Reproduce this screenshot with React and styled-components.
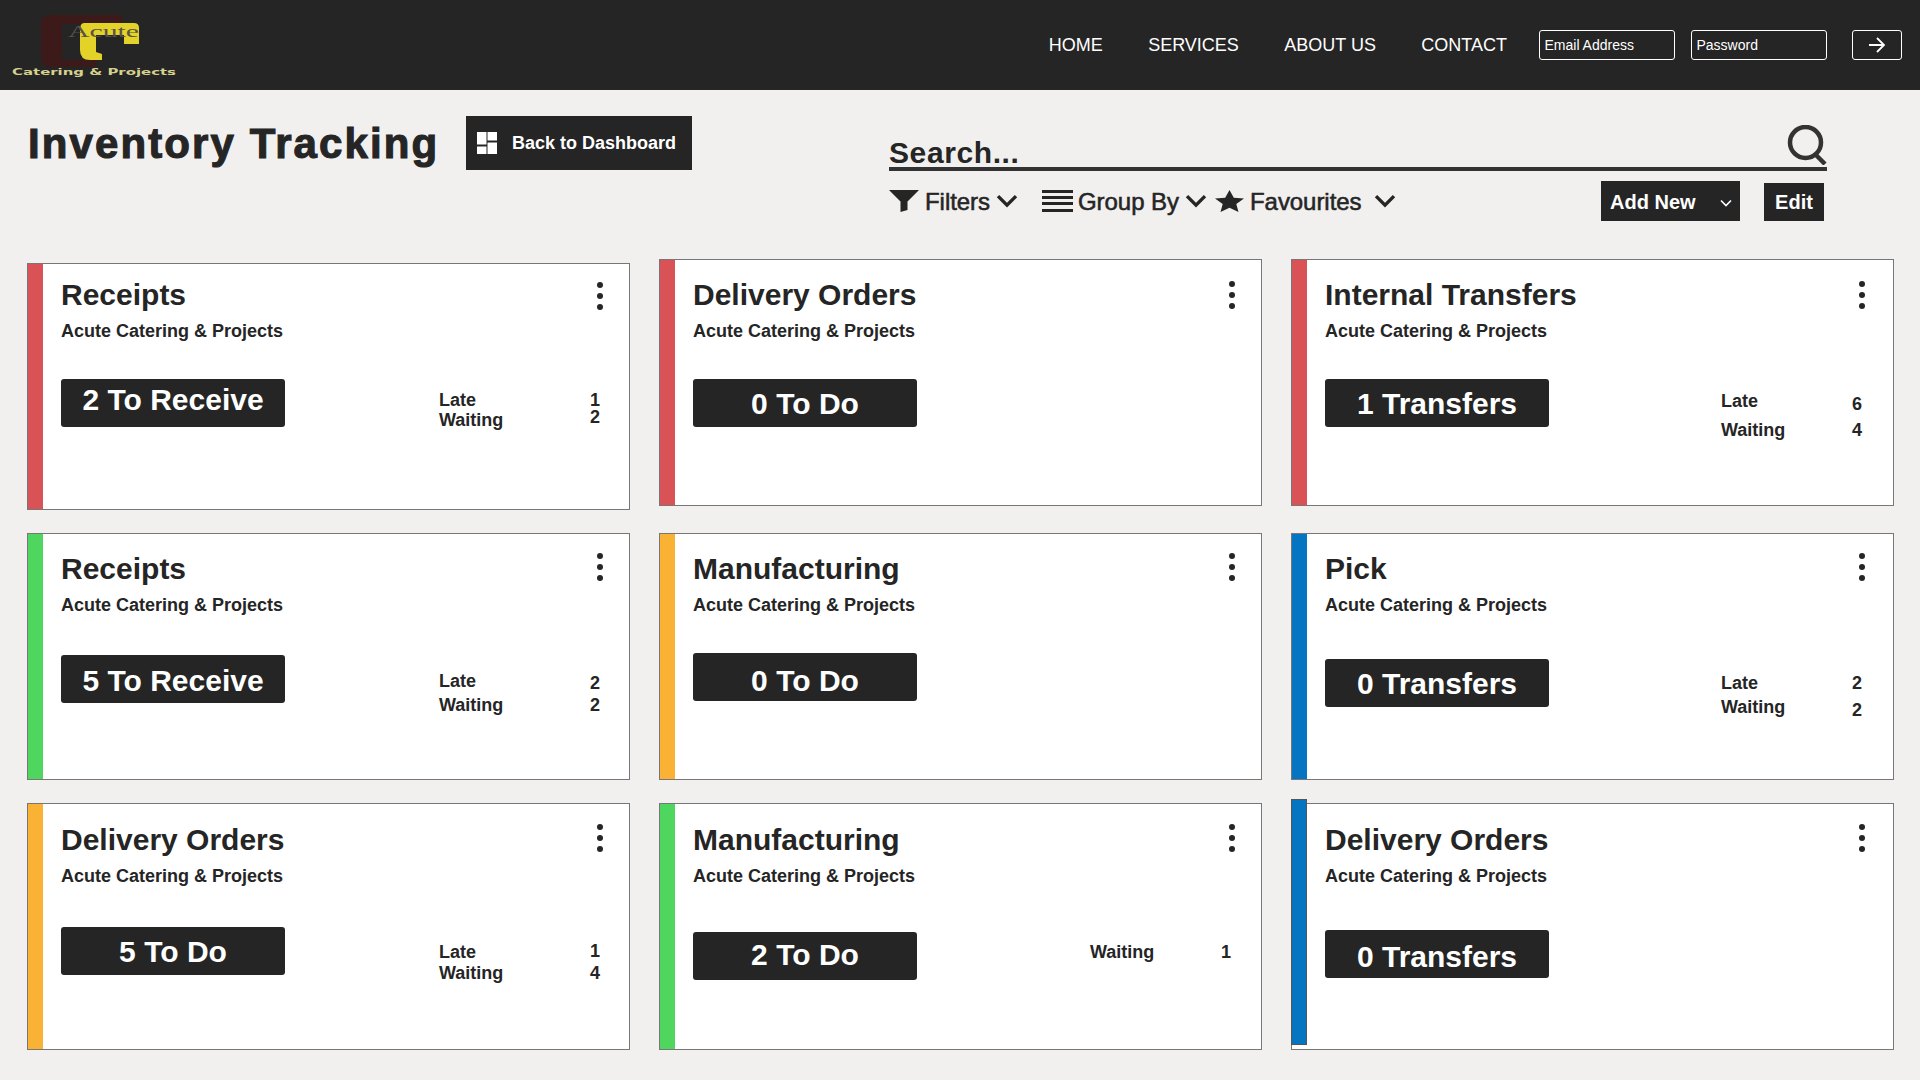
import React from "react"
import styled, { createGlobalStyle } from "styled-components"

const GlobalStyle = createGlobalStyle`
  html, body {
    margin: 0;
    background: #f1f0ef;
  }
  * {
    box-sizing: border-box;
  }
  body {
    font-family: "Liberation Sans", Arial, sans-serif;
    color: #252525;
  }
`
const Page = styled.div`
  min-height: 1080px;
  background: #f1f0ef;
`
const TopBar = styled.header`
  height: 90px;
  background: #252525;
  display: flex;
  align-items: center;
  padding: 0 18px 0 12px;
`
const Logo = styled.svg`
  width: 166px;
  height: 72px;
  display: block;
`
const Nav = styled.nav`
  margin-left: auto;
  display: flex;
  align-items: center;
  gap: 45.4px;
  padding-right: 32px;
`
const NavLink = styled.a`
  color: #fff;
  font-size: 18px;
  line-height: 20px;
`
const LoginInput = styled.input`
  width: 136px;
  height: 30px;
  margin-right: 16px;
  padding: 0 4.5px;
  border: 1px solid #fff;
  border-radius: 3px;
  background: transparent;
  color: #fff;
  font-family: inherit;
  font-size: 14px;
  &::placeholder {
    color: #fff;
    opacity: 1;
  }
`
const ArrowButton = styled.button`
  width: 50px;
  height: 30px;
  margin-left: 9px;
  padding: 0;
  border: 1.5px solid #fff;
  border-radius: 3px;
  background: transparent;
  display: flex;
  align-items: center;
  justify-content: center;
`
const Intro = styled.section`
  height: 169px;
  display: grid;
  grid-template-columns: 889px 938px;
`
const TitleBlock = styled.div`
  padding: 26px 0 0 28px;
  display: flex;
  align-items: flex-start;
  gap: 29px;
`
const PageTitle = styled.h1`
  margin: 0;
  width: 409px;
  font-size: 42px;
  line-height: 56px;
  font-weight: 700;
  letter-spacing: 2.1px;
  white-space: nowrap;
  -webkit-text-stroke: 1.1px #252525;
`
const BackButton = styled.button`
  width: 226px;
  height: 54px;
  padding: 0 0 0 11px;
  border: 0;
  background: #252525;
  color: #fff;
  font-family: inherit;
  font-size: 18px;
  font-weight: 700;
  display: flex;
  align-items: center;
  gap: 15px;
`
const FindBlock = styled.div`
  padding-top: 36px;
`
const SearchRow = styled.div`
  height: 45px;
  border-bottom: 4px solid #333;
  display: flex;
  align-items: flex-end;
  justify-content: space-between;
`
const SearchText = styled.span`
  font-size: 30px;
  line-height: 34px;
  font-weight: 700;
  letter-spacing: 0.6px;
  margin-bottom: -3px;
`
const SearchIcon = styled.svg`
  width: 40px;
  height: 40px;
  display: block;
  margin-bottom: 2px;
`
const Toolbar = styled.div`
  margin-top: 10px;
  height: 40px;
  display: flex;
  align-items: center;
`
const ToolGroup = styled.div`
  display: flex;
  align-items: center;
  gap: 6px;
  margin-left: ${(p) => p.$left || 0}px;
`
const ToolLabel = styled.span`
  font-size: 24px;
  line-height: 28px;
  letter-spacing: -0.05px;
  white-space: nowrap;
  -webkit-text-stroke: 0.55px #252525;
  margin: 2px ${(p) => p.$after || 0}px 0 ${(p) => p.$before || 0}px;
`
const AddNewButton = styled.button`
  width: 139px;
  height: 40px;
  margin-left: auto;
  padding: 3px 8px 0 9px;
  border: 0;
  background: #252525;
  color: #fff;
  font-family: inherit;
  font-size: 20px;
  font-weight: 700;
  display: flex;
  align-items: center;
  justify-content: space-between;
`
const EditButton = styled.button`
  width: 60px;
  height: 38px;
  margin: 2px 3px 0 24px;
  padding: 0;
  border: 0;
  background: #252525;
  color: #fff;
  font-family: inherit;
  font-size: 20px;
  font-weight: 700;
`
const CardGrid = styled.main`
  padding-left: 27px;
  display: grid;
  grid-template-columns: repeat(3, 603px);
  grid-template-rows: 251px 247px 247px;
  column-gap: 29px;
  row-gap: 23px;
`
const Card = styled.article`
  height: 247px;
  align-self: ${(p) => (p.$low ? "end" : "start")};
  border: 1px solid #777;
  background: #fff;
  display: flex;
`
const Strip = styled.div`
  width: ${(p) => (p.$lifted ? 16 : 15)}px;
  flex: none;
  background: ${(p) => p.$color};
  margin: ${(p) => (p.$lifted ? "-5px 0 4px -1px" : "0")};
  border: ${(p) => (p.$lifted ? "1px solid #555" : "0")};
`
const CardBody = styled.div`
  flex: 1;
  min-width: 0;
  padding: ${(p) => p.$top}px 0 0 18px;
`
const CardHead = styled.div`
  height: 36px;
  display: flex;
  align-items: center;
  justify-content: space-between;
  padding-right: ${(p) => p.$right}px;
`
const CardTitle = styled.h2`
  margin: 0;
  font-size: 30px;
  line-height: 36px;
  font-weight: 700;
`
const Kebab = styled.div`
  display: flex;
  flex-direction: column;
  gap: 5px;
  margin: ${(p) => (p.$nudge > 0 ? `${p.$nudge * 2}px 0 0` : `0 0 ${-p.$nudge * 2}px`)};
  span {
    width: 6px;
    height: 6px;
    border-radius: 50%;
    background: #252525;
  }
`
const Company = styled.p`
  margin: 8px 0 0;
  font-size: 18px;
  line-height: 20px;
  font-weight: 700;
`
const CountRow = styled.div`
  margin-top: ${(p) => p.$gap}px;
  display: flex;
  align-items: flex-start;
`
const CountButton = styled.button`
  width: 224px;
  height: 48px;
  flex: none;
  padding: ${(p) => (p.$shift < 0 ? `0 0 ${-p.$shift}px` : `${p.$shift}px 0 0`)};
  border: 0;
  border-radius: 3px;
  background: #252525;
  color: #fff;
  font-family: inherit;
  font-size: 30px;
  font-weight: 700;
`
const Stats = styled.div`
  margin-left: ${(p) => p.$left}px;
  width: ${(p) => p.$width}px;
  display: flex;
  justify-content: space-between;
`
const StatColumn = styled.div`
  padding-top: ${(p) => p.$top}px;
  display: flex;
  flex-direction: column;
  gap: ${(p) => p.$gap}px;
  font-size: 18px;
  line-height: 16px;
  font-weight: 700;
  text-align: ${(p) => p.$align || "left"};
`

const cards = [
  { title: "Receipts", color: "#d95356", low: true, pad: 13, gap: 38, label: "2 To Receive", shift: -6, right: 26, nudge: 1,
    stats: { left: 154, width: 161, names: ["Late", "Waiting"], nameTop: 13, nameGap: 4, values: [1, 2], valueTop: 13, valueGap: 1 } },
  { title: "Delivery Orders", color: "#d95356", gap: 38, label: "0 To Do", shift: 2, right: 26, nudge: 0 },
  { title: "Internal Transfers", color: "#d95356", gap: 38, label: "1 Transfers", shift: 2, right: 28, nudge: 0,
    stats: { left: 172, width: 141, names: ["Late", "Waiting"], nameTop: 14, nameGap: 13, values: [6, 4], valueTop: 17, valueGap: 10 } },
  { title: "Receipts", color: "#4fd65f", gap: 40, label: "5 To Receive", shift: 4, right: 26, nudge: -2,
    stats: { left: 154, width: 161, names: ["Late", "Waiting"], nameTop: 18, nameGap: 8, values: [2, 2], valueTop: 20, valueGap: 6 } },
  { title: "Manufacturing", color: "#f9b233", gap: 38, label: "0 To Do", shift: 8, right: 26, nudge: -2 },
  { title: "Pick", color: "#0575c1", gap: 44, label: "0 Transfers", shift: 2, right: 28, nudge: -2,
    stats: { left: 172, width: 141, names: ["Late", "Waiting"], nameTop: 16, nameGap: 8, values: [2, 2], valueTop: 16, valueGap: 11 } },
  { title: "Delivery Orders", color: "#f9b233", pad: 18, gap: 41, label: "5 To Do", shift: 2, right: 26, nudge: -2,
    stats: { left: 154, width: 161, names: ["Late", "Waiting"], nameTop: 17, nameGap: 5, values: [1, 4], valueTop: 16, valueGap: 6 } },
  { title: "Manufacturing", color: "#4fd65f", pad: 18, gap: 46, label: "2 To Do", shift: -2, right: 26, nudge: -2,
    stats: { left: 173, width: 141, names: ["Waiting"], nameTop: 12, nameGap: 0, values: [1], valueTop: 12, valueGap: 0 } },
  { title: "Delivery Orders", color: "#0575c1", pad: 18, gap: 44, label: "0 Transfers", shift: 6, right: 28, nudge: -2, lifted: true },
]

const Chevron = ({ size = 22 }) => (
  <svg width={size} height={size * 0.6} viewBox="0 0 22 13" fill="none" stroke="#252525" strokeWidth="3.4">
    <path d="M2 2l9 9 9-9" />
  </svg>
)

const InventoryCard = ({ card }) => (
  <Card $low={card.low}>
    <Strip $color={card.color} $lifted={card.lifted} />
    <CardBody $top={card.pad || 17}>
      <CardHead $right={card.right}>
        <CardTitle>{card.title}</CardTitle>
        <Kebab $nudge={card.nudge}>
          <span />
          <span />
          <span />
        </Kebab>
      </CardHead>
      <Company>Acute Catering &amp; Projects</Company>
      <CountRow $gap={card.gap}>
        <CountButton $shift={card.shift}>{card.label}</CountButton>
        {card.stats && (
          <Stats $left={card.stats.left} $width={card.stats.width}>
            <StatColumn $top={card.stats.nameTop} $gap={card.stats.nameGap}>
              {card.stats.names.map((name) => (
                <span key={name}>{name}</span>
              ))}
            </StatColumn>
            <StatColumn $top={card.stats.valueTop} $gap={card.stats.valueGap} $align="right">
              {card.stats.values.map((value, index) => (
                <span key={index}>{value}</span>
              ))}
            </StatColumn>
          </Stats>
        )}
      </CountRow>
    </CardBody>
  </Card>
)

const App = () => (
  <Page>
    <GlobalStyle />
    <TopBar>
      <Logo viewBox="0 0 166 72">
        <path d="M39 6H110V15H50V51H84V58H39Q29 58 29 48V16Q29 6 39 6Z" fill="#3c1a1a" />
        <path d="M72 14H122Q127 14 127 19V35H112V26H84V43L90 45V51H78Q68 51 68 41V21Q68 14 72 14Z" fill="#e3d228" />
        <text x="56" y="28" textLength="71" lengthAdjust="spacingAndGlyphs" fontFamily="Liberation Serif" fontSize="17" fill="#5b5148">
          Acute
        </text>
        <text x="0" y="66" textLength="164" lengthAdjust="spacingAndGlyphs" fontFamily="DejaVu Sans" fontWeight="700" fontSize="9.5" fill="#d6d28e">
          Catering &amp; Projects
        </text>
      </Logo>
      <Nav>
        <NavLink>HOME</NavLink>
        <NavLink>SERVICES</NavLink>
        <NavLink>ABOUT US</NavLink>
        <NavLink>CONTACT</NavLink>
      </Nav>
      <LoginInput placeholder="Email Address" />
      <LoginInput placeholder="Password" />
      <ArrowButton>
        <svg width="18" height="18" viewBox="0 0 18 18" fill="none" stroke="#fff" strokeWidth="1.8">
          <path d="M1 9h15M9 2l7 7-7 7" />
        </svg>
      </ArrowButton>
    </TopBar>
    <Intro>
      <TitleBlock>
        <PageTitle>Inventory Tracking</PageTitle>
        <BackButton>
          <svg width="20" height="22" viewBox="0 0 20 22" fill="#fff">
            <path d="M0 0h9.500v12.500H0zM10.500 0H20v8.500h-9.500zM0 14.500h9.500V22H0zM10.500 10.500H20V22h-9.500z" />
          </svg>
          Back to Dashboard
        </BackButton>
      </TitleBlock>
      <FindBlock>
        <SearchRow>
          <SearchText>Search...</SearchText>
          <SearchIcon viewBox="0 0 40 40" fill="none" stroke="#333" strokeWidth="4.500">
            <circle cx="18.500" cy="17.500" r="15.500" />
            <path d="M28 29l10 10" />
          </SearchIcon>
        </SearchRow>
        <Toolbar>
          <ToolGroup>
            <svg width="30" height="22" viewBox="0 0 30 22" fill="#252525">
              <path d="M0 0h30L18.500 11.500V20l-7 2V11.500z" />
            </svg>
            <ToolLabel>Filters</ToolLabel>
            <Chevron />
          </ToolGroup>
          <ToolGroup $left={24}>
            <svg width="31" height="22" viewBox="0 0 31 22" fill="#252525">
              <path d="M0 0h31v3H0zM0 6h31v3H0zM0 12h31v3H0zM0 19h31v3H0z" />
            </svg>
            <ToolLabel $before={-1}>Group By</ToolLabel>
            <Chevron />
          </ToolGroup>
          <ToolGroup $left={8}>
            <svg width="29" height="22" viewBox="0 0 29 28" preserveAspectRatio="none" fill="#252525">
              <path d="M14.500 0l4.300 9.800 10.200 1-7.700 7 2.200 10.200-9-5.300-9 5.300 2.200-10.200-7.700-7 10.200-1z" />
            </svg>
            <ToolLabel $after={6}>Favourites</ToolLabel>
            <Chevron />
          </ToolGroup>
          <AddNewButton>
            Add New
            <svg width="12" height="8" viewBox="0 0 12 8" fill="none" stroke="#fff" strokeWidth="1.600">
              <path d="M1 1.500l5 5 5-5" />
            </svg>
          </AddNewButton>
          <EditButton>Edit</EditButton>
        </Toolbar>
      </FindBlock>
    </Intro>
    <CardGrid>
      {cards.map((card, index) => (
        <InventoryCard key={index} card={card} />
      ))}
    </CardGrid>
  </Page>
)

export default App
